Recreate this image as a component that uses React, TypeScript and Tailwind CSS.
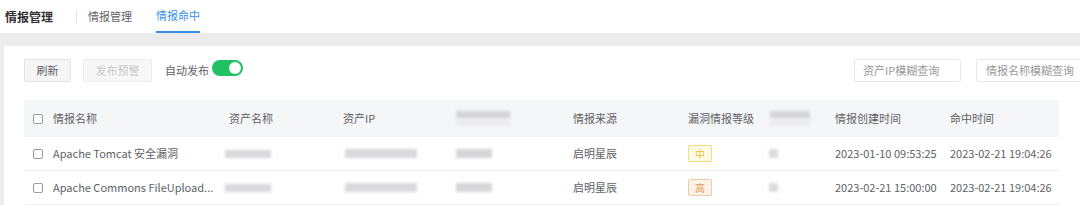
import React from 'react';

const FONT = { fontFamily: '"Noto Sans CJK SC", "Noto Sans", sans-serif' };

const COLS = 'grid grid-cols-[29px_176px_114px_113px_117px_115px_82px_65px_115px_109px]';

function Box() {
  return <span className="block w-[10px] h-[10px] border border-[#9a9a9a] rounded-[2px] bg-white" />;
}

function Blur({ w, h = 10, tone = '#d6d6d6' }: { w: number; h?: number; tone?: string }) {
  return <span className="block blur-[1.5px]" style={{ width: w, height: h, backgroundColor: tone }} />;
}

function Level({ v }: { v: '中' | '高' }) {
  const cls =
    v === '中'
      ? 'border-[#f3dc7c] bg-[#fffbe8] text-[#e8c23a]'
      : 'border-[#eecba6] bg-[#fdf2e7] text-[#e39b52]';
  return (
    <span className={`inline-flex items-center justify-center w-[24px] h-[17px] border rounded-[2px] text-[10px] ${cls}`}>
      {v}
    </span>
  );
}

interface Row {
  name: string;
  level: '中' | '高';
  created: string;
  hit: string;
}

const ROWS: Row[] = [
  { name: 'Apache Tomcat 安全漏洞', level: '中', created: '2023-01-10 09:53:25', hit: '2023-02-21 19:04:26' },
  { name: 'Apache Commons FileUpload...', level: '高', created: '2023-02-21 15:00:00', hit: '2023-02-21 19:04:26' },
];

export default function App() {
  return (
    <div className="w-[1080px] h-[205px] overflow-hidden bg-[#ececec] text-[11px] text-[#606266]" style={FONT}>
      <div className="h-[33px] bg-white flex items-stretch">
        <div className="pl-[5px] flex items-center text-[12px] font-bold text-[#303133] w-[76px]">情报管理</div>
        <div className="self-center w-px h-[14px] bg-[#e4e4e4]" />
        <div className="ml-[11px] flex items-center text-[#606266]">情报管理</div>
        <div className="ml-[24px] flex flex-col justify-end">
          <span className="flex-1 flex items-center text-[#3a8ee6]">情报命中</span>
          <span className="h-[2px] bg-[#3a8ee6]" />
        </div>
      </div>
      <div className="mt-[13px] ml-[4px] bg-white w-[1100px] h-[200px] pt-[13px] pl-[20px]">
        <div className="flex items-center h-[23px] w-[1062px]">
          <button className="h-[23px] w-[47px] border border-[#e2e2e2] bg-[#f5f5f5] rounded-[2px] text-[#606266]">刷新</button>
          <button className="ml-[12px] h-[23px] w-[69px] border border-[#ececec] bg-[#f7f7f7] rounded-[2px] text-[#c8c8c8]">发布预警</button>
          <span className="ml-[13px] text-[#606266]">自动发布</span>
          <span className="ml-[3px] -mt-[5px] w-[31px] h-[16px] rounded-full bg-[#1fc163] flex items-center justify-end pr-[2px]">
            <span className="w-[12px] h-[12px] rounded-full bg-white" />
          </span>
          <div className="ml-auto w-[107px] h-[23px] border border-[#e6e8ec] rounded-[2px] flex items-center pl-[8px] text-[#9a9a9a]">资产IP模糊查询</div>
          <div className="ml-[15px] w-[110px] h-[23px] border border-[#e6e8ec] rounded-[2px] flex items-center pl-[9px] text-[#9a9a9a]">情报名称模糊查询</div>
        </div>
        <div className="mt-[18px] w-[1035px]">
          <div className={`${COLS} h-[37px] items-center bg-[#f5f6f8]`}>
            <span className="pl-[9px]"><Box /></span>
            <span>情报名称</span>
            <span>资产名称</span>
            <span>资产IP</span>
            <span className="flex flex-col gap-0">
              <Blur w={54} h={8} tone="#d4d4d6" />
              <Blur w={54} h={7} tone="#ebebed" />
            </span>
            <span>情报来源</span>
            <span>漏洞情报等级</span>
            <span className="flex flex-col">
              <Blur w={40} h={8} tone="#d6d6d8" />
              <Blur w={40} h={7} tone="#ebebed" />
            </span>
            <span>情报创建时间</span>
            <span>命中时间</span>
          </div>
          {ROWS.map((r, i) => (
            <div key={i} className={`${COLS} h-[34px] items-center border-b border-[#ebeef5]`}>
              <span className="pl-[9px]"><Box /></span>
              <span className="whitespace-nowrap">{r.name}</span>
              <span className="-ml-[4px]"><Blur w={46} h={8} tone="#d9d9db" /></span>
              <span className="ml-[2px]"><Blur w={72} h={9} tone="#d9d9db" /></span>
              <span><Blur w={36} h={9} tone="#d6d6d8" /></span>
              <span>启明星辰</span>
              <span><Level v={r.level} /></span>
              <span className="-ml-[1px]"><Blur w={9} h={9} tone="#dcdcdc" /></span>
              <span className="whitespace-nowrap">{r.created}</span>
              <span className="whitespace-nowrap">{r.hit}</span>
            </div>
          ))}
        </div>
      </div>
    </div>
  );
}
